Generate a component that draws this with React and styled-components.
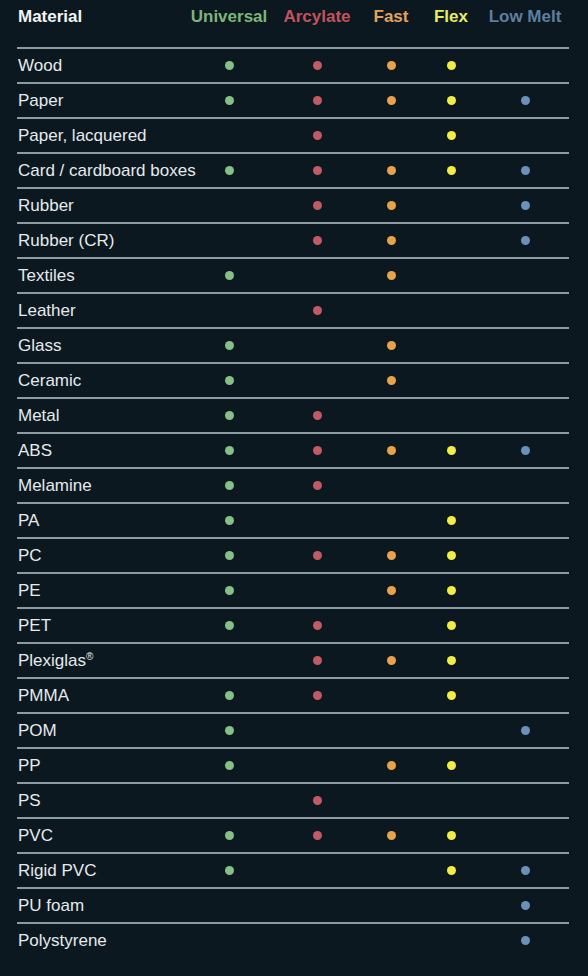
import React from 'react';
import styled, { createGlobalStyle } from 'styled-components';

const columns = [
  { key: 'u', label: 'Universal', head: '#7fb47a', dot: '#86c086' },
  { key: 'a', label: 'Arcylate', head: '#c4525c', dot: '#c05a64' },
  { key: 'f', label: 'Fast', head: '#e2a25c', dot: '#e8a24a' },
  { key: 'x', label: 'Flex', head: '#e6ec66', dot: '#f3ec45' },
  { key: 'l', label: 'Low Melt', head: '#5e7fa0', dot: '#6b90ba' },
];

const materials = [
  ['Wood', 'uafx'],
  ['Paper', 'uafxl'],
  ['Paper, lacquered', 'ax'],
  ['Card / cardboard boxes', 'uafxl'],
  ['Rubber', 'afl'],
  ['Rubber (CR)', 'afl'],
  ['Textiles', 'uf'],
  ['Leather', 'a'],
  ['Glass', 'uf'],
  ['Ceramic', 'uf'],
  ['Metal', 'ua'],
  ['ABS', 'uafxl'],
  ['Melamine', 'ua'],
  ['PA', 'ux'],
  ['PC', 'uafx'],
  ['PE', 'ufx'],
  ['PET', 'uax'],
  [<>Plexiglas<sup>®</sup></>, 'afx'],
  ['PMMA', 'uax'],
  ['POM', 'ul'],
  ['PP', 'ufx'],
  ['PS', 'a'],
  ['PVC', 'uafx'],
  ['Rigid PVC', 'uxl'],
  ['PU foam', 'l'],
  ['Polystyrene', 'l'],
];

const MaterialTable = () => (
  <Page>
    <GlobalStyle />
    <Header>
      <HeadName>Material</HeadName>
      {columns.map((c) => (
        <HeadCell key={c.key} $color={c.head}>{c.label}</HeadCell>
      ))}
    </Header>
    {materials.map(([name, flags], i) => (
      <Row key={i}>
        <Name>{name}</Name>
        {columns.map((c) => (
          <Cell key={c.key}>
            {flags.includes(c.key) && <Dot $color={c.dot} />}
          </Cell>
        ))}
      </Row>
    ))}
  </Page>
);

const GlobalStyle = createGlobalStyle`
  html, body {
    margin: 0;
    background: #0b1820;
  }
`;

const grid = `
  display: grid;
  grid-template-columns: 168px 88px 88px 60px 60px 88px;
  align-items: center;
`;

const Page = styled.div`
  width: 552px;
  min-height: 976px;
  padding: 0 19px 0 17px;
  background: #0b1820;
  font-family: 'Liberation Sans', Arial, sans-serif;
  color: #e6eaec;
`;

const Header = styled.div`
  ${grid}
  height: 33px;
  margin-bottom: 14px;
  font-size: 17px;
  font-weight: 700;
`;

const HeadName = styled.div`
  padding-left: 1px;
  color: #f2f4f5;
`;

const HeadCell = styled.div`
  text-align: center;
  white-space: nowrap;
  color: ${(p) => p.$color};
`;

const Row = styled.div`
  ${grid}
  height: 33px;
  border-top: 2px solid #8d9ba2;
  font-size: 17px;

  sup {
    font-size: 10px;
    vertical-align: 6px;
    line-height: 0;
  }
`;

const Name = styled.div`
  padding-left: 1px;
  white-space: nowrap;
  color: #e6eaec;
`;

const Cell = styled.div`
  display: flex;
  justify-content: center;
`;

const Dot = styled.span`
  width: 9px;
  height: 9px;
  border-radius: 50%;
  background: ${(p) => p.$color};
`;

export default MaterialTable;
